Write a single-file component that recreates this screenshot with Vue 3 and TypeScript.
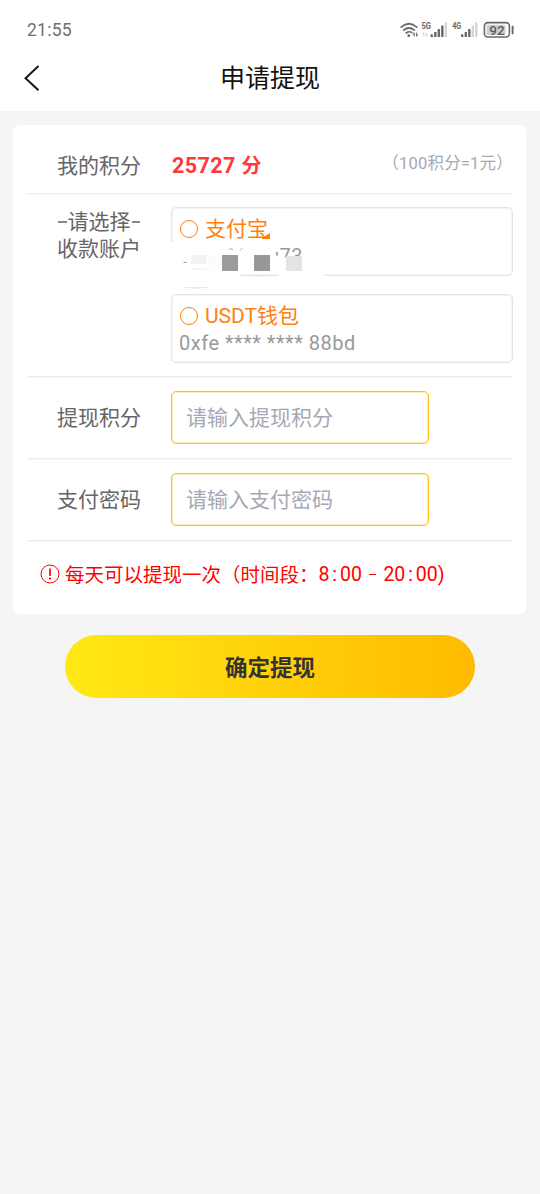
<script setup lang="ts">
import { ref } from 'vue'

const amount = ref('')
const password = ref('')
const account = ref('')
</script>

<template>
  <div class="page" lang="zh-CN">
    <header class="top">
      <div class="status">
        <span class="time">21:55</span>
        <svg class="system" width="116" height="22" viewBox="0 0 116 22">
          <g fill="none" stroke="#696969" stroke-width="1.7" stroke-linecap="round">
            <path d="M1.2 7.2Q9 .3 16.8 7.2" />
            <path d="M3.7 10.2Q9 5.8 14.3 10.2" />
            <path d="M6.2 13Q9 10.8 11.8 12.5" />
          </g>
          <circle cx="8.8" cy="15.7" r="1.4" fill="#696969" />
          <path d="M14.2 12l-2 2.5h1.5v2h1v-2M16.4 17l2-2.5h-1.5v-2h-1v2" fill="#696969" />
          <text x="21.5" y="8.7" class="net" textLength="9.5" lengthAdjust="spacingAndGlyphs">5G</text>
          <path d="M24 12l-2 2.5h1.5v2h1v-2M26.4 17l2-2.5h-1.5v-2h-1v2" fill="#d0d0d0" />
          <g fill="#696969">
            <rect x="30.5" y="14.2" width="2.4" height="2.8" rx=".5" />
            <rect x="34.1" y="12" width="2.4" height="5" rx=".5" />
            <rect x="37.6" y="9" width="2.4" height="8" rx=".5" />
            <rect x="41.1" y="5.5" width="2.4" height="11.5" rx=".5" />
            <rect x="61" y="14.2" width="2.4" height="2.8" rx=".5" />
            <rect x="64.6" y="12" width="2.4" height="5" rx=".5" />
            <rect x="68.1" y="9" width="2.4" height="8" rx=".5" />
          </g>
          <g fill="#d4d4d4">
            <rect x="44.6" y="2.3" width="2.4" height="14.7" rx=".5" />
            <rect x="71.6" y="5.5" width="2.4" height="11.5" rx=".5" />
            <rect x="75.1" y="2.3" width="2.4" height="14.7" rx=".5" />
          </g>
          <text x="52.2" y="8.7" class="net" textLength="9" lengthAdjust="spacingAndGlyphs">4G</text>
          <rect x="84.4" y="2.6" width="25" height="14.4" rx="3.4" fill="#fff" stroke="#696969" stroke-width="1.6" />
          <rect x="86.5" y="4.7" width="19" height="10.3" rx="1" fill="#cfcfcf" />
          <rect x="111.7" y="5.8" width="1.9" height="8.4" rx=".7" fill="#696969" />
          <text x="97" y="14.5" text-anchor="middle" class="level">92</text>
        </svg>
      </div>
      <nav class="nav">
        <svg class="back" width="18" height="28" viewBox="0 0 18 28">
          <path d="M15.5 2L2.5 14.2L15.5 26.3" fill="none" stroke="#111" stroke-width="1.9" />
        </svg>
        <h1>申请提现</h1>
      </nav>
    </header>

    <main class="card">
      <section class="row points">
        <span class="label">我的积分</span>
        <strong>25727 <span class="unit">分</span></strong>
        <span class="rate">（100积分=1元）</span>
      </section>

      <section class="row accounts">
        <span class="label"><i class="dash"></i>请选择<i class="dash"></i><br />收款账户</span>
        <div class="options">
          <div class="option" @click="account = 'alipay'">
            <div class="name"><i class="radio"></i><span>支付宝</span></div>
            <div class="number hidden-number">u73</div>
            <svg class="mosaic" width="170" height="86" viewBox="0 0 170 86">
              <path d="M0 35H88V42H105V48L108 50L132 51V63H153V71H108V67Q88 65.5 69 67V72H0Z" fill="#fff" />
              <path d="M70 68Q88 71 107 68Z" fill="#e4e4e4" />
              <path d="M99 32V26L91 31V32Z" fill="#ff8000" />
              <path d="M58 42.5Q60 41 62 42.5M69 43.5L71.5 41" fill="none" stroke="#aaa" />
              <rect x="12.5" y="55" width="3" height="1" fill="#999" />
              <rect x="20" y="48" width="15" height="15" fill="#f2f2f2" />
              <rect x="35" y="48" width="16" height="15" fill="#fcfcfc" />
              <path d="M20 57Q36 55 43 60Q36 63 20 61Z" fill="#fff" />
              <rect x="51" y="48" width="16" height="16" fill="#9b9b9b" />
              <rect x="83" y="48" width="16" height="16" fill="#979797" />
              <rect x="115" y="49" width="16" height="15" fill="#e4e4e4" />
              <path d="M11 80H41Q26 83.5 11 80Z" fill="#e8e8e8" />
            </svg>
          </div>
          <div class="option" @click="account = 'usdt'">
            <div class="name"><i class="radio"></i><span>USDT钱包</span></div>
            <div class="number">0xfe **** **** 88bd</div>
          </div>
        </div>
      </section>

      <section class="row field">
        <span class="label">提现积分</span>
        <input v-model="amount" type="text" placeholder="请输入提现积分" />
      </section>
      <section class="row field">
        <span class="label">支付密码</span>
        <input v-model="password" type="password" placeholder="请输入支付密码" />
      </section>

      <p class="notice">
        <svg width="20" height="20" viewBox="0 0 20 20">
          <circle cx="10" cy="10" r="9" fill="none" stroke="#f00" stroke-width="1" />
          <path d="M10 4.5V12" stroke="#f00" stroke-width="1.7" />
          <circle cx="10" cy="14.6" r="1.1" fill="#f00" />
        </svg>
        <span class="daily">每天可以提现一次（时间段：</span><span class="hours">8<i class="colon">:</i>00<i class="to"></i>20<i class="colon">:</i>00)</span>
      </p>
    </main>

    <button class="submit" type="button">确定提现</button>
  </div>
</template>

<style>
body {
  background: #f5f5f5;
}
</style>

<style scoped>
.page {
  width: 540px;
  min-height: 1194px;
  background: #f5f5f5;
  font-family: Roboto, "Noto Sans CJK SC", sans-serif;
  color: #666;
}
.page * {
  box-sizing: border-box;
}
.page i {
  font-style: normal;
}
.top {
  height: 111px;
  background: #fff;
}
.status {
  height: 50px;
  padding: 20px 24px 0 27px;
  display: flex;
  justify-content: space-between;
}
.time {
  font-size: 17.5px;
  line-height: 20px;
  letter-spacing: .25px;
  color: #707070;
}
.net {
  font: 700 9px Roboto, sans-serif;
  fill: #666;
}
.level {
  font: 500 13.5px Roboto, sans-serif;
  fill: #5d5d5d;
}
.nav {
  height: 56px;
  padding-left: 23px;
  display: grid;
  grid-template-columns: 18px 1fr 41px;
  align-items: center;
}
h1 {
  margin: 0;
  padding-top: 2px;
  text-align: center;
  font-size: 25px;
  line-height: 36px;
  font-weight: 400;
  color: #111;
}
.card {
  width: 513px;
  height: 489px;
  margin: 14px 0 0 13px;
  padding: 0 13px 0 14px;
  background: #fff;
  border-radius: 6px;
}
.row {
  display: flex;
  padding-left: 30px;
  border-bottom: 1px solid #ebebeb;
  box-shadow: 0 1px 0 #f8f8f8;
}
.label {
  width: 114px;
  flex: none;
  font-size: 21px;
  line-height: 28px;
}
.points {
  height: 69px;
  align-items: center;
  padding-top: 12px;
}
.points .label {
  padding-top: 1px;
}
.points strong {
  margin-top: 1px;
  padding-left: 1px;
  font-size: 21.5px;
  line-height: 28px;
  letter-spacing: .4px;
  color: #ff3838;
}
.unit {
  font-size: 20px;
}
.rate {
  margin-left: auto;
  margin-top: -6px;
  font-size: 16.5px;
  letter-spacing: .2px;
  color: #a6a8b5;
}
.accounts {
  height: 183px;
  padding-top: 14px;
}
.accounts .label {
  padding-top: 1px;
  line-height: 27px;
}
.dash {
  display: inline-block;
  width: 8.5px;
  height: 2px;
  margin: 0 1px 6px 1px;
  background: #888;
}
.options {
  flex: 1;
  display: grid;
  gap: 18px;
  align-content: start;
  margin-top: -1px;
}
.option {
  position: relative;
  height: 69px;
  padding: 8px 7px 0;
  border: 1px solid #e4e4e4;
  border-radius: 5px;
  box-shadow: inset 0 0 0 1px #f5f5f5;
}
.name {
  display: flex;
  align-items: center;
  height: 26px;
  font-size: 21px;
  color: #ff8010;
}
.name span {
  margin-top: -4px;
}
.radio {
  width: 18px;
  height: 18px;
  margin: 0 7px 0 1px;
  border: 1px solid #ff8010;
  border-radius: 50%;
}
.number {
  height: 28px;
  font-size: 20px;
  line-height: 28px;
  letter-spacing: .5px;
  color: #999;
}
.hidden-number {
  padding-left: 89px;
}
.mosaic {
  position: absolute;
  left: -1px;
  top: -1px;
}
.field {
  height: 82px;
  align-items: center;
}
input {
  width: 257.5px;
  height: 53.5px;
  padding: 0 14px;
  border: 1px solid #ffbf10;
  border-radius: 5px;
  outline: none;
  background: #fff;
  box-shadow: inset 0 0 0 1px #ffedb8;
  font: 21px Roboto, "Noto Sans CJK SC", sans-serif;
}
input::placeholder {
  color: #a6a8b5;
  opacity: 1;
}
.notice {
  display: flex;
  align-items: center;
  height: 66px;
  margin: 0;
  padding-left: 13px;
  color: #f00;
  font-size: 19.5px;
  white-space: nowrap;
}
.daily {
  margin-left: 5px;
  margin-top: -2px;
}
.hours {
  margin-top: 1px;
}
.colon {
  display: inline-block;
  width: 10.5px;
  text-align: center;
}
.to {
  display: inline-block;
  width: 7.5px;
  height: 1.5px;
  margin: 0 7px 6px;
  background: #f00;
}
.submit {
  display: block;
  width: 410px;
  height: 63px;
  margin: 21px 0 0 65px;
  padding: 0 0 2px;
  border: 0;
  border-radius: 32px;
  background: linear-gradient(90deg, #ffe914, #ffba00);
  color: #333;
  font: 700 22.5px Roboto, "Noto Sans CJK SC", sans-serif;
}
</style>
